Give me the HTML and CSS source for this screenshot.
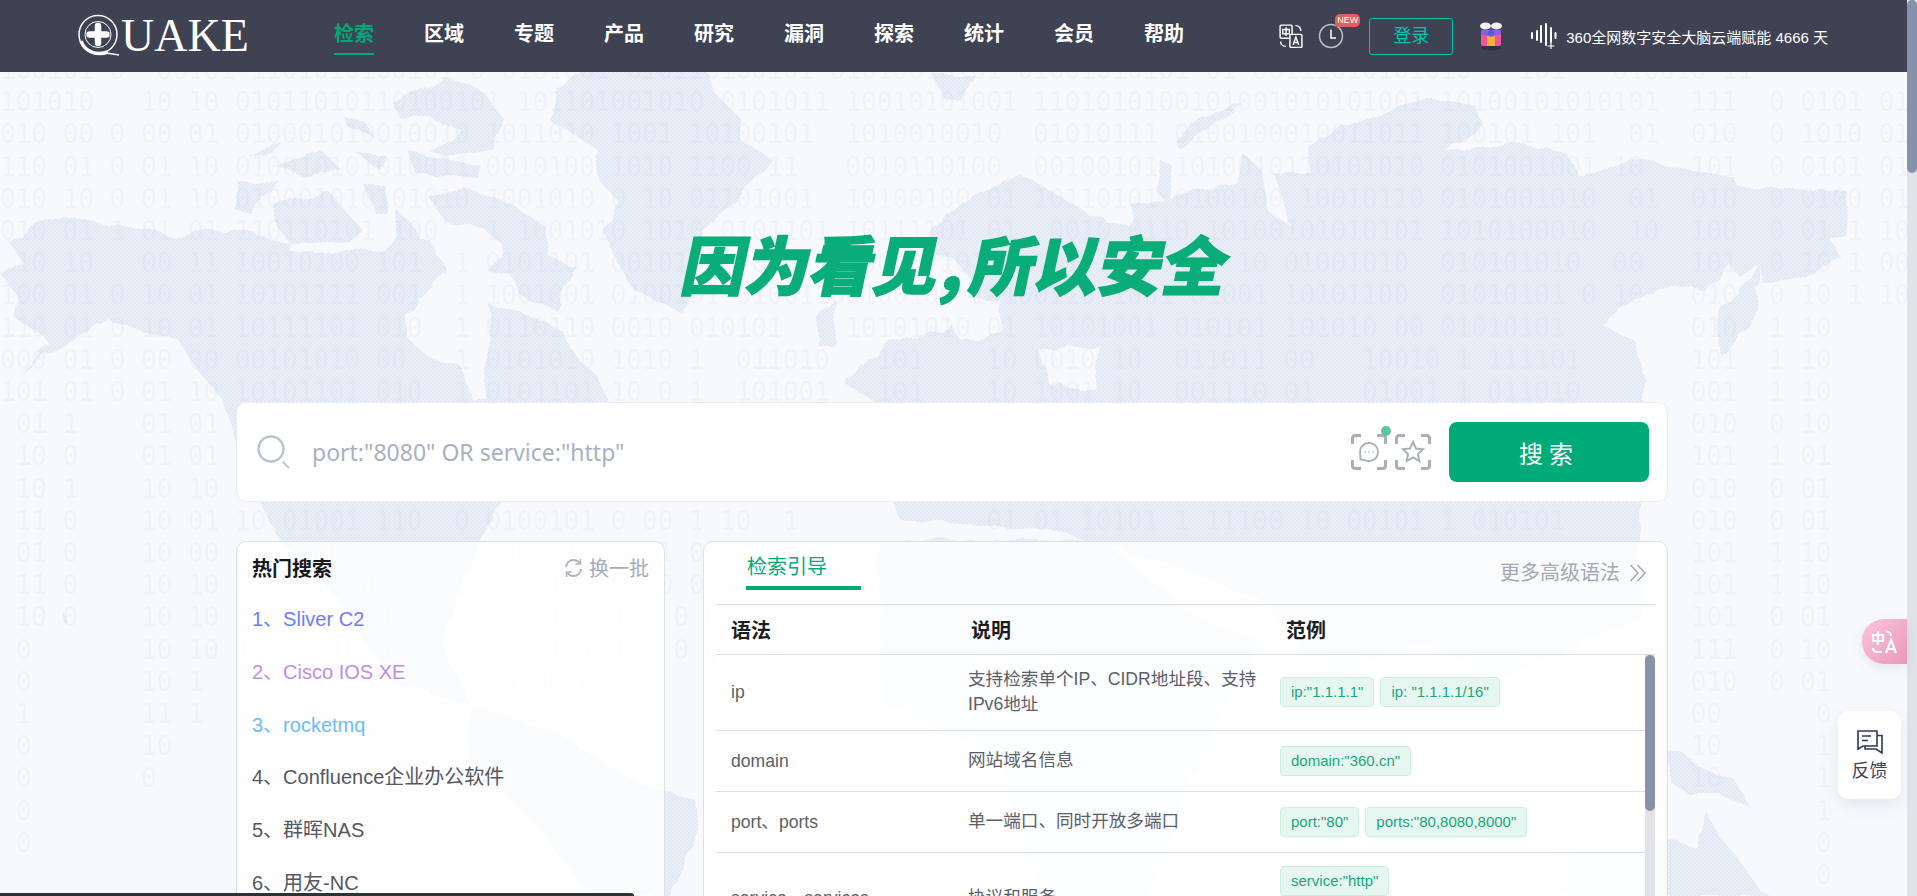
FILE: index.html
```html
<!DOCTYPE html>
<html lang="zh-CN">
<head>
  <meta charset="UTF-8">
  <title>QUAKE</title>
  <link rel="stylesheet" href="styles.css">
</head>
<body>
<div class="page">
  <div class="inner">

    <!-- fundo: mapa e digitos -->
    <div class="backdrop" aria-hidden="true">
      <svg class="map" width="1907" height="896" viewBox="0 0 1907 896">
        <defs>
          <pattern id="dither" width="4" height="4" patternUnits="userSpaceOnUse">
            <rect width="4" height="4" fill="#e9eef7"/>
            <rect width="2" height="2" fill="#e2e8f4"/>
            <rect x="2" y="2" width="2" height="2" fill="#e2e8f4"/>
          </pattern>
          <filter id="coast" x="-5%" y="-5%" width="110%" height="110%">
            <feTurbulence type="fractalNoise" baseFrequency="0.04" numOctaves="2" seed="7"/>
            <feDisplacementMap in="SourceGraphic" scale="12"/>
          </filter>
          <mask id="land" maskUnits="userSpaceOnUse" x="0" y="0" width="1907" height="896">
            <g filter="url(#coast)">
              <g fill="#fff">
                <!-- america do norte -->
                <path d="M9 242L30 228L62 215L107 225L143 227L179 242L195 232L210 227L223 233L250 233L290 243L290 252L326 253L344 250L384 252L393 237L420 240L429 240L446 270L437 280L420 297L406 317L406 337L429 357L464 370L473 400L487 400L484 370L491 337L491 307L518 310L562 330L576 357L598 377L607 400L600 430L560 470L500 501L483 540L440 640L470 705L390 680L340 600L280 540L260 501L223 400L192 363L179 340L147 333L107 318L89 330L58 347L22 375L50 345L45 337L13 317L18 297L0 273L27 267Z"/>
                <path d="M237 180L281 183L250 213L232 207Z"/>
                <path d="M272 203L330 193L362 230L348 240L290 243L277 227Z"/>
                <path d="M429 197L464 187L509 203L545 227L549 257L576 267L554 307L522 297L513 277L487 270L504 247L482 227L446 223Z"/>
                <path d="M397 210L415 227L429 257L446 273L424 270L393 247Z"/>
                <path d="M366 187L388 187L388 213L375 213Z"/>
                <path d="M393 103L420 90L446 77L482 90L504 120L491 150L446 157L429 150L464 133L429 117L402 120Z"/>
                <path d="M277 167L321 150L339 167L304 177Z"/>
                <path d="M411 153L482 167L478 177L415 173Z"/>
                <path d="M357 153L384 153L379 170Z"/>
                <path d="M250 157L281 140L272 153Z"/>
                <path d="M344 117L366 123L375 137L348 127Z"/>
                <path d="M63 612L70 624L66 625Z"/>
                <!-- groenlandia -->
                <path d="M590 60L700 60L715 93L739 117L739 140L770 157L747 187L715 217L700 240L690 290L680 312L634 290L616 260L603 230L620 203L598 180L598 150L549 120L558 93Z"/>
                <!-- eurasia -->
                <path d="M933 227L964 200L1018 174L1057 194L1088 214L1111 220L1135 207L1197 190L1236 184L1243 154L1267 174L1313 174L1306 144L1352 124L1383 114L1430 97L1476 107L1484 124L1445 150L1515 144L1546 147L1570 157L1577 174L1655 160L1686 170L1733 177L1740 189L1795 187L1847 191L1846 236L1830 239L1843 260L1793 281L1763 284L1760 263L1740 277L1732 267L1710 281L1703 291L1677 288L1660 289L1632 301L1604 327L1632 338L1640 361L1647 381L1643 398L1640 500L1640 620L1500 680L1420 640L1330 680L1260 600L1160 560L1050 530L900 520L860 430L879 404L844 383L867 361L894 341L950 330L965 300L975 285L955 260L925 250Z"/>
                <path d="M1760 262L1750 281L1717 313L1715 332L1722 358L1740 336L1750 329L1755 305L1760 284Z"/>
                <path d="M933 75L975 75L960 100L945 100Z"/>
                <path d="M1174 140L1197 117L1243 103L1220 122L1180 150Z"/>
                <path d="M1160 160L1172 165L1168 205L1155 190Z"/>
                <path d="M817 320L836 300L832 345L817 345Z"/>
                <!-- africa, america do sul, oceania -->
                <path d="M880 540L1100 540L1200 620L1260 640L1200 760L1150 896L1040 896L1000 760L880 700Z"/>
                <path d="M470 705L560 735L640 785L695 800L698 830L670 896L590 896L540 830L470 760Z"/>
                <path d="M1668 750L1683 753L1700 768L1735 780L1750 807L1720 795L1690 795L1668 780Z"/>
                <path d="M1560 840L1668 840L1698 848L1708 812L1720 837L1737 857L1760 890L1770 896L1560 896Z"/>
              </g>
              <!-- golfos e mares -->
              <g fill="#000">
                <path d="M1259 165L1275 175L1290 225L1272 215Z"/>
                <path d="M1100 210L1135 200L1130 225L1108 225Z"/>
                <path d="M940 295L1000 300L1003 330L960 340Z"/>
                <path d="M1040 350L1100 345L1095 390L1050 385Z"/>
              </g>
            </g>
          </mask>
        </defs>
        <rect width="1907" height="896" fill="url(#dither)" mask="url(#land)"/>
      </svg>
<pre class="digits">100101 0  00101 1101010100101 0 0101001 010110100101 01010010101 01001010101 01 00111010101010   101   010010 11
101010   10 10 01011010110100101 101101001010 0101011 10010101001 1101010100101001010101001 10100101010101  111  0 0101 01
010 00 0 00 01 010001010010010 1011010 1001 10100101  1010010010  01010111 0100100010011011 100101 101  01  010  0 1010 01
110 01 0 01 10 010010101010011 0010100 1010 1100 11   0010110100  00100101 1010010110101010 0101001001 10   101  0 0101 01
010 10 0 01 10 010001010101010 1001010 0 10 01101001  10100100 01 10110101 0100100 10010110 0101001010  01  010  0 0100 01
010 01 1 01 01 110110101 100   1 1001010 1010 0101101 10111101 01  0010 0110 10100101010101 1010100010  10  100  0 01 1 10
 10 10   00 11 10010100 101  1 0101101 00101010 0101  10010 10100 101 10100101 10 01001010  010101010  00   101  0 10 1 00
100 01 0 10 01 10101111 001  1 1001001 0100101 01001100100100 10100110 1001 01001 10101100  01010101 0 10   010  0 10 1 10
110 01 0 10 01 10111101 010  1 0110110 0010 010101    10101010 01 10101001 010101 101010 00 01010101        010  1 10
000 01 0 00 00 00101010 00   1 0101010 1010 1  011010   101    10 0010 10  011011 00   10010 1 111101       101  1 10
101 01 0 01 10 10101101 010  1 0101101 10 0 1  101001   101    10 1001 10  001110 01   01001 1 011010       001  1 10
 01 1    01 01 <i class="skip-all"></i>010  0 10
 10 0    01 01 <i class="skip-all"></i>101  1 01
 10 1    10 10 <i class="skip-all"></i>010  0 01
 11 0    10 01 10 01001 110  0 0100101 0 00 1 10  1            01 01 10101 1 11100 10 00101 1 010101        010  0 01
 01 0    10 00    10001      0 000101  0 01 0         <i class="skip-c"></i>101  1 10
 11 0    10 10 00 0010 0 010 1 101010  0 10 0         <i class="skip-c"></i>101  1 10
 10 0    10 10    01    01      0 010 01   0 01  1    <i class="skip-c"></i>101  0 01
 0       10 10 10 01010 01       1 1 1 10  0 0   0    <i class="skip-c"></i>111  0 10
 0       10 1     101 101    0  0 00 0 0              <i class="skip-c"></i>010  0 01
 1       11 1  <i class="skip-all"></i>00      0
 0       10    <i class="skip-all"></i>10      1
 0       0     <i class="skip-all"></i>10      1
 0             <i class="skip-all"></i>        1
 0             <i class="skip-all"></i>        0
               <i class="skip-all"></i>        0</pre>
    </div>

    <header class="topbar">
      <a class="logo">
        <svg width="42" height="44" viewBox="0 0 42 44">
          <circle cx="21" cy="20.500" r="19" fill="none" stroke="#fff" stroke-width="1.500"/>
          <path d="M4 27C8 38 20 42 31 38" fill="none" stroke="#fff" stroke-width="3.500"/>
          <path d="M26 38.500L42 41" stroke="#fff" stroke-width="1.500"/>
          <circle cx="21" cy="20.500" r="13" fill="#3e4252" stroke="#fff" stroke-width="1"/>
          <path d="M21 12V29M12.500 20.500H29.500" stroke="#fff" stroke-width="6.500" stroke-linecap="round"/>
        </svg>
        <span class="logo-text">UAKE</span>
      </a>

      <nav class="menu">
        <a class="menu-item active">检索</a>
        <a class="menu-item">区域</a>
        <a class="menu-item">专题</a>
        <a class="menu-item">产品</a>
        <a class="menu-item">研究</a>
        <a class="menu-item">漏洞</a>
        <a class="menu-item">探索</a>
        <a class="menu-item">统计</a>
        <a class="menu-item">会员</a>
        <a class="menu-item">帮助</a>
      </nav>

      <div class="top-right">
        <svg class="lang-icon" width="24" height="24" viewBox="0 0 22 22" fill="none" stroke="#fff" stroke-width="1.300">
          <rect x="1" y="1" width="11" height="12" rx="1"/>
          <path d="M3.500 5H9.500V9H3.500ZM6.500 3V11"/>
          <rect x="10" y="9.500" width="11" height="12" rx="1" fill="#3e4252"/>
          <path d="M13 19L15.500 12L18 19M14 17H17"/>
          <path d="M15 1.500C18 1.500 20 3.500 20 6.500M1.500 16C1.500 18.500 3.500 20.500 6.500 20.500"/>
        </svg>
        <span class="history">
          <svg width="26" height="26" viewBox="0 0 26 26" fill="none" stroke="#bfc1c7" stroke-width="1.500">
            <circle cx="13" cy="13" r="11.500"/>
            <path d="M13 6.500V15H18" stroke="#fff"/>
          </svg>
          <span class="badge-new">NEW</span>
        </span>
        <a class="login">登录</a>
        <svg class="gift" width="26" height="30" viewBox="0 0 26 30">
          <ellipse cx="13" cy="26.500" rx="10" ry="3" fill="#2f3240"/>
          <rect x="3" y="9" width="20" height="16" rx="2" fill="#f0549b"/>
          <rect x="9" y="9" width="8" height="16" fill="#f8b040"/>
          <path d="M3 9H23V13L13 16L3 13Z" fill="#8b5fe0"/>
          <ellipse cx="7.500" cy="5" rx="5.500" ry="3.500" fill="#f4f2f8"/>
          <ellipse cx="18.500" cy="5" rx="5.500" ry="3.500" fill="#f4f2f8"/>
          <path d="M13 6L9.500 14H16.500Z" fill="#5a55d8"/>
        </svg>
        <svg class="wave" width="27" height="26" viewBox="0 0 27 26" stroke="#fff" stroke-width="2" stroke-linecap="round" fill="none">
          <path d="M2 10V15M7 8V17M11 3V19M16 1V22M21 5V19M25.500 10V15"/>
          <path d="M18 23H24M21 20V26" stroke-width="1.200"/>
        </svg>
        <span class="days">360全网数字安全大脑云端赋能 4666 天</span>
      </div>
    </header>

    <main class="content">
      <section class="hero">
        <h1 class="slogan">因为看见<span class="slogan-comma">,</span>所以安全</h1>
      </section>

      <section class="searchbox">
        <svg class="search-icon" width="34" height="34" viewBox="0 0 34 34" fill="none" stroke="#bcc3cf">
          <circle cx="14" cy="14" r="12.500" stroke-width="2.500"/>
          <path d="M26 27L32 33" stroke-width="2"/>
        </svg>
        <span class="placeholder">port:"8080" OR service:"http"</span>
        <span class="tool tool-chat">
          <svg width="36" height="36" viewBox="0 0 36 36" fill="none" stroke="#a9afbb" stroke-width="3">
            <path d="M1.500 10V4.500Q1.500 1.500 4.500 1.500H10M26 1.500H31.500Q34.500 1.500 34.500 4.500V10M34.500 26V31.500Q34.500 34.500 31.500 34.500H26M10 34.500H4.500Q1.500 34.500 1.500 31.500V26"/>
            <path d="M18 9C12.500 9 9 13 9 18C9 20 9.500 22 9.500 25.500C13 25.500 15 27 18 27C23.500 27 27 23 27 18C27 13 23.500 9 18 9Z" stroke-width="1.800"/>
            <path d="M13.500 18H14.500M17.500 18H18.500M21.500 18H22.500" stroke-width="2"/>
          </svg>
          <i class="tool-dot"></i>
        </span>
        <span class="tool">
          <svg width="36" height="36" viewBox="0 0 36 36" fill="none" stroke="#a9afbb" stroke-width="3">
            <path d="M1.500 10V4.500Q1.500 1.500 4.500 1.500H10M26 1.500H31.500Q34.500 1.500 34.500 4.500V10M34.500 26V31.500Q34.500 34.500 31.500 34.500H26M10 34.500H4.500Q1.500 34.500 1.500 31.500V26"/>
            <path d="M18 8L21 14.500L28 15.300L23 20L24.300 27L18 23.500L11.700 27L13 20L8 15.300L15 14.500Z" stroke-width="2"/>
          </svg>
        </span>
        <button class="search-btn">搜索</button>
      </section>

      <section class="panels">
        <div class="panel hot">
          <div class="hot-head">
            <h3 class="hot-title">热门搜索</h3>
            <a class="hot-change">
              <svg width="19" height="20" viewBox="0 0 19 20" fill="none" stroke="#aeb4bf" stroke-width="2">
                <path d="M2 9C2.500 5 5.500 2 9.500 2C12 2 14 3 15.500 5"/>
                <path d="M17 11C16.500 15 13.500 18 9.500 18C7 18 5 17 3.500 15"/>
                <path d="M16.500 1V6H11.500M2.500 19V14H7.500" stroke-width="1.500"/>
              </svg>
              换一批
            </a>
          </div>
          <ul class="hot-list">
            <li class="hot-item first">1、Sliver C2</li>
            <li class="hot-item second">2、Cisco IOS XE</li>
            <li class="hot-item third">3、rocketmq</li>
            <li class="hot-item">4、Confluence企业办公软件</li>
            <li class="hot-item">5、群晖NAS</li>
            <li class="hot-item">6、用友-NC</li>
          </ul>
        </div>

        <div class="panel guide">
          <div class="guide-head">
            <a class="guide-tab">检索引导</a>
            <a class="guide-more">更多高级语法
              <svg width="18" height="18" viewBox="0 0 18 18" fill="none" stroke="#a3a9b6" stroke-width="1.500">
                <path d="M1.500 1L9 9L1.500 17M8.500 1L16 9L8.500 17"/>
              </svg>
            </a>
          </div>
          <div class="table-head">
            <span class="th th-a">语法</span>
            <span class="th th-b">说明</span>
            <span class="th">范例</span>
          </div>
          <div class="table-body">
            <div class="rows">
              <div class="row">
                <span class="cell-a">ip</span>
                <span class="cell-b">支持检索单个IP、CIDR地址段、支持IPv6地址</span>
                <span class="cell-c"><code class="tag">ip:"1.1.1.1"</code><code class="tag">ip: "1.1.1.1/16"</code></span>
              </div>
              <div class="row">
                <span class="cell-a">domain</span>
                <span class="cell-b">网站域名信息</span>
                <span class="cell-c"><code class="tag">domain:"360.cn"</code></span>
              </div>
              <div class="row">
                <span class="cell-a">port、ports</span>
                <span class="cell-b">单一端口、同时开放多端口</span>
                <span class="cell-c"><code class="tag">port:"80"</code><code class="tag">ports:"80,8080,8000"</code></span>
              </div>
              <div class="row">
                <span class="cell-a">service、services</span>
                <span class="cell-b">协议和服务</span>
                <span class="cell-c stack"><code class="tag">service:"http"</code><code class="tag">services:"http"</code></span>
              </div>
            </div>
            <div class="scrollbar inner-bar"><i class="thumb"></i></div>
          </div>
        </div>
      </section>
    </main>

    <a class="lang-tab">
      <svg width="28" height="24" viewBox="0 0 28 24" fill="none" stroke="#fff" stroke-width="2.200">
        <path d="M2 5H12V11H2ZM7 1V15"/>
        <path d="M15 1.500C18 1.500 20 3.500 20 6M2 18C2 20.500 4 22 7 22H11"/>
        <path d="M15 23L20 10L25 23M17 19H23"/>
      </svg>
    </a>

    <a class="feedback">
      <svg width="26" height="25" viewBox="0 0 26 25" fill="none" stroke="#2f3b4e" stroke-width="1.600">
        <path d="M1 2H20V17H6L1 20Z"/>
        <path d="M20 6.500H25V24L19 20H8V17"/>
        <path d="M5 7H14M5 11.500H11"/>
      </svg>
      <span>反馈</span>
    </a>
  </div>
  <div class="scrollbar page-bar"><i class="thumb"></i></div>
</div>
<div class="bottom-bar"></div>
</body>
</html>
```

FILE: styles.css
```css
html, body {
  margin: 0;
  height: 100%;
  overflow: hidden;
}

body {
  font-family: "Liberation Sans", "Noto Sans CJK SC", sans-serif;
  background-color: #f7f9fd;
  color: #5c6068;
}

a {
  cursor: pointer;
}

.page {
  display: flex;
  height: 100vh;
  overflow: hidden;
}

.scrollbar {
  flex-shrink: 0;
  width: 10px;
  background-color: #e1e3e9;
}

.thumb {
  display: block;
  background-color: #8792a8;
  border-radius: 5px;
}

.page-bar .thumb {
  height: 173px;
}

.inner-bar .thumb {
  height: 156px;
}

.inner {
  position: relative;
  flex: 1;
  min-width: 0;
}

.backdrop {
  position: absolute;
  top: 0;
  left: 0;
  right: 0;
  height: 896px;
  overflow: hidden;
}

.map {
  position: absolute;
  top: 0;
  left: 0;
}

.digits {
  position: absolute;
  top: 54px;
  left: 0;
  margin: 0;
  font-family: "DejaVu Sans Mono", monospace;
  font-size: 26px;
  line-height: 32.2px;
  color: rgba(190, 208, 220, 0.12);
}

.digits i {
  display: inline-block;
}

.skip-all {
  width: 93ch;
}

.skip-c {
  width: 54ch;
}

/* topo */
.topbar {
  position: relative;
  display: flex;
  align-items: center;
  height: 72px;
  background-color: #3e4252;
}

.logo {
  display: flex;
  align-items: center;
  width: 276px;
  margin-left: 77px;
  flex-shrink: 0;
}

.logo-text {
  margin-left: 2px;
  font-family: "Liberation Serif", serif;
  font-size: 46px;
  line-height: 44px;
  color: #fff;
}

.menu {
  display: flex;
  gap: 50px;
  margin-left: -19px;
}

.menu-item {
  position: relative;
  font-size: 20px;
  font-weight: bold;
  line-height: 30px;
  color: #fff;
  padding-bottom: 4px;
}

.menu-item.active {
  color: #00a878;
}

.menu-item.active::after {
  content: "";
  position: absolute;
  left: 0;
  right: 0;
  bottom: -2px;
  height: 2px;
  background-color: #00a878;
}

.top-right {
  display: flex;
  align-items: center;
  margin-left: auto;
  margin-right: 79px;
}

.history {
  position: relative;
  display: flex;
  margin-left: 15px;
}

.badge-new {
  position: absolute;
  top: -9px;
  left: 17px;
  width: 25px;
  height: 13px;
  border-radius: 5px 5px 5px 0;
  background-color: #e0605a;
  color: #fff;
  font-size: 9px;
  line-height: 13px;
  text-align: center;
}

.login {
  width: 82px;
  height: 35px;
  margin-left: 25px;
  border: 1px solid #00c4b4;
  border-radius: 3px;
  color: #00c4b4;
  font-size: 18px;
  line-height: 35px;
  text-align: center;
}

.gift {
  margin-left: 25px;
}

.wave {
  margin-left: 26px;
}

.days {
  margin-left: 9px;
  font-size: 15px;
  color: #fff;
}

/* conteudo */
.content {
  position: relative;
  width: 1432px;
  margin-left: 236px;
}

.hero {
  display: flex;
  justify-content: center;
  height: 330px;
}

.slogan {
  margin: 150px 12px 0 0;
  font-family: "Noto Sans CJK SC", sans-serif;
  font-size: 64px;
  font-weight: 900;
  line-height: 80px;
  color: #0aad78;
  transform: skewX(-12deg);
  -webkit-text-stroke: 1.5px #0aad78;
}

.slogan-comma {
  margin: 0 6px 0 4px;
}

.searchbox {
  display: flex;
  align-items: center;
  height: 98px;
  padding-left: 20px;
  border: 1px solid #e9ecf3;
  border-radius: 10px;
  background-color: #fff;
}

.search-icon {
  flex-shrink: 0;
}

.placeholder {
  margin-left: 21px;
  font-family: "Noto Sans", sans-serif;
  font-size: 23px;
  color: #a9b1bf;
}

.tool {
  position: relative;
  display: flex;
  margin-left: 8px;
}

.tool-chat {
  margin-left: auto;
}

.tool-dot {
  position: absolute;
  top: -8px;
  right: -4px;
  width: 10px;
  height: 10px;
  border-radius: 50%;
  background-color: #5bc79b;
}

.search-btn {
  width: 200px;
  height: 60px;
  margin: 0 18px 0 18px;
  border: none;
  border-radius: 8px;
  background-color: #00ab78;
  color: #fff;
  font-family: inherit;
  font-size: 24px;
  letter-spacing: 6px;
  cursor: pointer;
}

.panels {
  display: grid;
  grid-template-columns: 429px 965px;
  gap: 38px;
  margin-top: 39px;
}

.panel {
  border: 1px solid #dde1ea;
  border-radius: 10px;
  background-color: rgba(255, 255, 255, 0.8);
}

.hot {
  padding: 0 15px;
}

.hot-head {
  display: flex;
  align-items: center;
  justify-content: space-between;
  height: 51px;
}

.hot-title {
  margin: 0;
  font-size: 20px;
  color: #17191f;
}

.hot-change {
  display: flex;
  align-items: center;
  gap: 6px;
  font-size: 20px;
  color: #a6acb8;
}

.hot-list {
  list-style: none;
  margin: 0;
  padding: 0;
}

.hot-item {
  font-size: 20px;
  line-height: 52.8px;
  color: #555860;
}

.hot-item.first {
  color: #6f7cf6;
}

.hot-item.second {
  color: #c08ee0;
}

.hot-item.third {
  color: #6bbcf8;
}

.guide {
  padding: 0 12px;
}

.guide-head {
  display: flex;
  justify-content: space-between;
  align-items: flex-start;
  height: 62px;
}

.guide-tab {
  width: 115px;
  height: 48px;
  margin-left: 30px;
  padding-left: 1px;
  box-sizing: border-box;
  border-bottom: 4px solid #00ab78;
  color: #00ab78;
  font-size: 20px;
  line-height: 50px;
}

.guide-more {
  display: flex;
  align-items: center;
  gap: 9px;
  margin: 16px 8px 0 0;
  color: #a3a9b6;
  font-size: 20px;
  line-height: 30px;
}

.table-head {
  display: flex;
  align-items: center;
  height: 49px;
  border-top: 1px solid #dde1ea;
  border-bottom: 1px solid #dde1ea;
  background-color: rgba(255, 255, 255, 0.4);
}

.th {
  font-size: 20px;
  font-weight: bold;
  color: #1c1e24;
}

.th-a {
  width: 240px;
  margin-left: 15px;
}

.th-b {
  width: 315px;
}

.table-body {
  display: flex;
  height: 400px;
  overflow: hidden;
  background-color: rgba(255, 255, 255, 0.5);
}

.rows {
  flex: 1;
  min-width: 0;
}

.row {
  display: flex;
  align-items: center;
  min-height: 60px;
  border-bottom: 1px solid #dde1ea;
  font-size: 17.6px;
  line-height: 25px;
  color: #5c6068;
}

.cell-a {
  width: 237px;
  margin-left: 15px;
  flex-shrink: 0;
}

.cell-b {
  width: 300px;
  margin-right: 12px;
  padding: 12px 0 13px;
  flex-shrink: 0;
}

.cell-c {
  display: flex;
  flex-wrap: wrap;
  gap: 3px 6px;
  padding: 13px 0 14px;
}

.cell-c.stack {
  flex-direction: column;
  align-items: flex-start;
}

.tag {
  box-sizing: border-box;
  height: 30px;
  padding: 0 10px;
  border: 1px solid #cfeee2;
  border-radius: 4px;
  background-color: #e6f7f1;
  color: #1aa77a;
  font-family: inherit;
  font-size: 15px;
  line-height: 28px;
}

/* flutuantes */
.lang-tab {
  position: absolute;
  top: 619px;
  right: 0;
  display: flex;
  align-items: center;
  justify-content: center;
  width: 45px;
  height: 45px;
  border-radius: 22px 0 0 22px;
  background: linear-gradient(135deg, #fbc6dc, #ea98b7);
  box-shadow: 0 4px 12px rgba(120, 130, 160, 0.15);
}

.feedback {
  position: absolute;
  top: 711px;
  right: 6px;
  display: flex;
  flex-direction: column;
  align-items: center;
  gap: 2px;
  box-sizing: border-box;
  width: 63px;
  height: 88px;
  padding-top: 18px;
  border-radius: 10px;
  background-color: #fff;
  box-shadow: 0 6px 16px rgba(120, 130, 160, 0.15);
  color: #3c4658;
  font-size: 18px;
}

.bottom-bar {
  position: fixed;
  left: 0;
  bottom: 0;
  width: 634px;
  height: 3px;
  border-radius: 0 4px 0 0;
  background-color: #2c3338;
}
```
